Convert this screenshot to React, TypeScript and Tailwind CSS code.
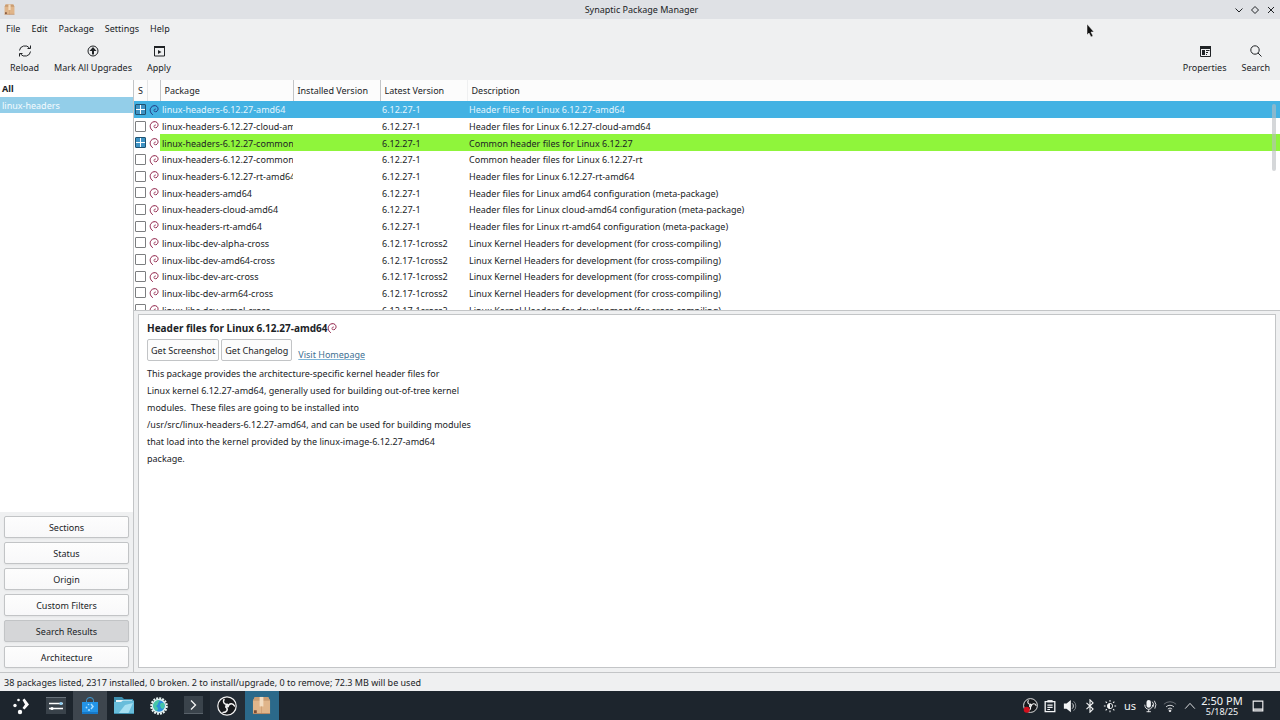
import type { ReactNode } from "react";
import { clsx } from "clsx";

interface Pkg {
  name: string;
  latest: string;
  description: string;
  state?: "selected" | "marked";
}

const CROSS = "Linux Kernel Headers for development (for cross-compiling)";

const packages: Pkg[] = [
  { name: "linux-headers-6.12.27-amd64", latest: "6.12.27-1", description: "Header files for Linux 6.12.27-amd64", state: "selected" },
  { name: "linux-headers-6.12.27-cloud-am", latest: "6.12.27-1", description: "Header files for Linux 6.12.27-cloud-amd64" },
  { name: "linux-headers-6.12.27-common", latest: "6.12.27-1", description: "Common header files for Linux 6.12.27", state: "marked" },
  { name: "linux-headers-6.12.27-common", latest: "6.12.27-1", description: "Common header files for Linux 6.12.27-rt" },
  { name: "linux-headers-6.12.27-rt-amd64", latest: "6.12.27-1", description: "Header files for Linux 6.12.27-rt-amd64" },
  { name: "linux-headers-amd64", latest: "6.12.27-1", description: "Header files for Linux amd64 configuration (meta-package)" },
  { name: "linux-headers-cloud-amd64", latest: "6.12.27-1", description: "Header files for Linux cloud-amd64 configuration (meta-package)" },
  { name: "linux-headers-rt-amd64", latest: "6.12.27-1", description: "Header files for Linux rt-amd64 configuration (meta-package)" },
  { name: "linux-libc-dev-alpha-cross", latest: "6.12.17-1cross2", description: CROSS },
  { name: "linux-libc-dev-amd64-cross", latest: "6.12.17-1cross2", description: CROSS },
  { name: "linux-libc-dev-arc-cross", latest: "6.12.17-1cross2", description: CROSS },
  { name: "linux-libc-dev-arm64-cross", latest: "6.12.17-1cross2", description: CROSS },
  { name: "linux-libc-dev-armel-cross", latest: "6.12.17-1cross2", description: CROSS },
];

const menus = ["File", "Edit", "Package", "Settings", "Help"];
const views = ["Sections", "Status", "Origin", "Custom Filters", "Search Results", "Architecture"];

const details = `This package provides the architecture-specific kernel header files for
Linux kernel 6.12.27-amd64, generally used for building out-of-tree kernel
modules.  These files are going to be installed into
/usr/src/linux-headers-6.12.27-amd64, and can be used for building modules
that load into the kernel provided by the linux-image-6.12.27-amd64
package.`;

function Icon({ children, className = "size-4" }: { children: ReactNode; className?: string }) {
  return (
    <svg className={clsx("shrink-0", className)} viewBox="0 0 16 16" fill="none" stroke="currentColor" aria-hidden="true">
      {children}
    </svg>
  );
}

function DebianSwirl({ blue = false }: { blue?: boolean }) {
  return (
    <svg
      className={clsx("inline-block size-[10px] align-middle", blue ? "text-[#24357f]" : "text-[#8f2148]")}
      viewBox="0 0 20 20"
      fill="none"
      stroke="currentColor"
      strokeLinecap="round"
      aria-hidden="true"
    >
      <path strokeWidth="2" d="M7 19C2 16 1 9 4 5c3-4 9-5 12-2 3 3 3 8-1 10" />
      <path strokeWidth="1.600" d="M15 13c-2 1-5 1-5-2 0-2 1-3 3-3" />
    </svg>
  );
}

function PackageBox({ className }: { className: string }) {
  return (
    <svg className={className} viewBox="0 0 20 20" aria-hidden="true">
      <path fill="#e0b58a" d="M3 1h14l2 4v14H1V5z" />
      <path fill="#c99c72" d="M3 1h14l2 4H1z" />
      <path fill="#f2dcc1" d="M8 1h4v10H8z" />
      <path fill="#d0a276" d="M9.500 11h1v8h-1z" />
      <path fill="#7d4f36" d="M2 15h3v3H2z" />
      <path fill="#b58562" d="M1 18h18v1H1z" />
    </svg>
  );
}

function ObsLogo({ className, recording = false }: { className: string; recording?: boolean }) {
  return (
    <svg className={className} viewBox="0 0 20 20" fill="none" stroke="#f4f4f4" aria-hidden="true">
      <circle cx="10" cy="10" r="9.200" fill="#17191c" strokeWidth="1.200" />
      <g strokeWidth="1.500" strokeLinecap="round">
        <path d="M10.500 8.500C7 8.500 5.500 6 7 3.500" />
        <path d="M11 10.500c1-3.500 5-3.800 6.500-.5" />
        <path d="M9 11c2.500 2.500 1 5.500-3 5.500" />
        <path d="M10.500 8.500a2 2 0 0 1 .5 2M11 10.500a2 2 0 0 1-2 .5M9 11a2 2 0 0 1 1.500-2.500" />
      </g>
      {recording && <circle cx="5" cy="15.500" r="4" fill="#d3101d" stroke="none" />}
    </svg>
  );
}

function ToolButton({ label, children }: { label: string; children: ReactNode }) {
  return (
    <button className="flex flex-col items-center gap-[2px]">
      {children}
      <span>{label}</span>
    </button>
  );
}

function TitleBar() {
  return (
    <header className="grid h-[19px] shrink-0 grid-cols-3 items-center bg-[#dfe1e5] pr-px pl-1">
      <PackageBox className="size-[11px]" />
      <h1 className="text-center">Synaptic Package Manager</h1>
      <div className="flex justify-end">
        <button aria-label="Minimize">
          <Icon><path d="M4.500 6.500 8 10l3.500-3.500" /></Icon>
        </button>
        <button aria-label="Maximize">
          <Icon><path d="m8 4.500 3.500 3.500-3.500 3.500-3.500-3.500z" /></Icon>
        </button>
        <button aria-label="Close">
          <Icon><path d="m5 5 6 6m0-6-6 6" /></Icon>
        </button>
      </div>
    </header>
  );
}

function ToolBar() {
  return (
    <div className="flex h-[42px] shrink-0 items-start justify-between pt-[5px] pr-[10px] pl-[10px]">
      <div className="flex gap-[15px]">
        <ToolButton label="Reload">
          <Icon>
            <path d="M2.500 7.500a5.500 5 0 0 1 10-2.500M13.500 2.500V5.500h-3M13.500 8.500a5.500 5 0 0 1-10 2.500M2.500 13.500V10.500h3" />
          </Icon>
        </ToolButton>
        <ToolButton label="Mark All Upgrades">
          <Icon>
            <circle cx="8" cy="8" r="5" />
            <path strokeWidth="2" d="M8 11.500V7" />
            <path fill="currentColor" stroke="none" d="M8 4 11.500 8h-7z" />
          </Icon>
        </ToolButton>
        <ToolButton label="Apply">
          <Icon>
            <path d="M3.500 3.500h10v9.500h-10z" />
            <path strokeWidth="2" d="M3 4h11" />
            <path fill="currentColor" stroke="none" d="M7 7 10.500 9 7 11z" />
          </Icon>
        </ToolButton>
      </div>
      <div className="flex gap-[15px]">
        <ToolButton label="Properties">
          <Icon>
            <path d="M3.500 3.500h10v10h-10z" />
            <path strokeWidth="3" d="M3 4.500h11" />
            <path fill="currentColor" stroke="none" d="M5 7h3v5H5z" />
            <path d="M9 7.500h3.500M9 9.500h2M9 11.500h1" />
          </Icon>
        </ToolButton>
        <ToolButton label="Search">
          <Icon>
            <circle cx="7" cy="7" r="4.200" />
            <path d="m10 10 3.500 3.500" />
          </Icon>
        </ToolButton>
      </div>
    </div>
  );
}

function Sidebar() {
  return (
    <aside className="flex w-[134px] shrink-0 flex-col border-r border-[#c3c5c7]">
      <ul className="flex-1 bg-white">
        <li className="h-[17px] pl-[2px] leading-[17px] font-bold">All</li>
        <li className="h-4 bg-[#93cee9] pl-[2px] leading-[17px] text-[#f4fbfe]">linux-headers</li>
      </ul>
      <div className="flex flex-col gap-1 p-1">
        {views.map((view) => (
          <button
            key={view}
            className={clsx(
              "h-[22px] rounded-xs border border-[#c2c4c6] shadow-xs",
              view === "Search Results" ? "bg-[#d5d6d8]" : "bg-linear-to-b from-[#fdfdfd] to-[#f8f8f9]"
            )}
          >
            {view}
          </button>
        ))}
      </div>
    </aside>
  );
}

function PackageRow({ pkg }: { pkg: Pkg }) {
  const selected = pkg.state === "selected";
  const fill = pkg.state === "marked" ? "bg-[#8ff53b]" : "";

  return (
    <tr className={selected ? "bg-[#43b2e3] text-[#e3f5fd]" : ""}>
      <td className="p-0">
        <div className="relative ml-px size-[11px]">
          <input
            type="checkbox"
            aria-label={`Mark ${pkg.name}`}
            defaultChecked={!!pkg.state}
            className="block size-[11px] appearance-none rounded-[1px] border border-[#7c7e80] bg-white checked:border-[#1f5270] checked:bg-[#3f93c4]"
          />
          {pkg.state && (
            <svg className="pointer-events-none absolute inset-0" viewBox="0 0 11 11" stroke="#fff" aria-hidden="true">
              <path d="M5.500 1v9M1 5.500h9" />
            </svg>
          )}
        </div>
      </td>
      <td className="p-0 pl-[2px] leading-none">
        <DebianSwirl blue={selected} />
      </td>
      <td className={clsx("p-0 pt-px pl-[2px]", fill)}>
        <div className="overflow-hidden">{pkg.name}</div>
      </td>
      <td className={clsx("p-0", fill)}></td>
      <td className={clsx("p-0 pt-px pl-[2px]", fill)}>{pkg.latest}</td>
      <td className={clsx("p-0 pt-px pl-[2px]", fill)}>{pkg.description}</td>
    </tr>
  );
}

function PackageList() {
  return (
    <div className="relative h-[231px] shrink-0 overflow-hidden border-b border-[#c3c5c7] bg-white">
      {/* row heights share out what the header leaves */}
      <table className="h-[238px] w-full table-fixed border-collapse whitespace-nowrap">
        <colgroup>
          <col className="w-[13px]" />
          <col className="w-[13px]" />
          <col className="w-[133px]" />
          <col className="w-[87px]" />
          <col className="w-[87px]" />
          <col />
        </colgroup>
        <thead>
          <tr className="h-[21px] bg-[#fcfcfc] text-left">
            <th className="border-r border-[#e4e5e6] p-0 pl-1 font-normal">S</th>
            <th className="border-r border-[#c3c5c7] p-0"></th>
            <th className="border-r border-[#c3c5c7] p-0 pl-1 font-normal">Package</th>
            <th className="border-r border-[#c3c5c7] p-0 pl-1 font-normal">Installed Version</th>
            <th className="border-r border-[#eff0f1] p-0 pl-1 font-normal">Latest Version</th>
            <th className="p-0 pl-1 font-normal">Description</th>
          </tr>
        </thead>
        <tbody>
          {packages.map((pkg, i) => (
            <PackageRow key={i} pkg={pkg} />
          ))}
        </tbody>
      </table>
      <div className="absolute top-6 right-1 h-[67px] w-1 rounded-full bg-[#b9bdc0]/60" />
    </div>
  );
}

function DetailsPane() {
  return (
    <section className="mx-1 mt-[3px] mb-1 flex-1 border border-[#c3c5c7] bg-white px-2 pt-[6px]">
      <h2 className="flex items-center text-[10px] leading-[14px] font-bold">
        Header files for Linux 6.12.27-amd64
        <DebianSwirl />
      </h2>
      <div className="mt-1 flex items-end gap-[2px]">
        <button className="h-[22px] rounded-xs border border-[#c2c4c6] bg-[#fcfcfc] px-[3px]">Get Screenshot</button>
        <button className="h-[22px] rounded-xs border border-[#c2c4c6] bg-[#fcfcfc] px-[3px]">Get Changelog</button>
        <a href="#homepage" className="ml-1 text-[#3f7193] underline decoration-[#7fb6d8]">
          Visit Homepage
        </a>
      </div>
      <p className="mt-1 leading-[17px] whitespace-pre-wrap">{details}</p>
    </section>
  );
}

function Task({ label, className, children }: { label: string; className?: string; children: ReactNode }) {
  return (
    <button aria-label={label} className={clsx("flex items-center justify-center", className)}>
      {children}
    </button>
  );
}

function TaskBar() {
  return (
    <footer className="flex h-[29px] shrink-0 justify-between bg-[#1d252d] pr-2 pl-1 text-[#f3f4f5]">
      <div className="grid w-[275px] grid-cols-8">
        <Task label="Application Launcher">
          <svg className="size-[18px]" viewBox="0 0 18 18" fill="#fcfcfc" aria-hidden="true">
            <circle cx="6.500" cy="3" r="1.300" />
            <circle cx="3" cy="8.500" r="1.700" />
            <circle cx="8" cy="15" r="2.200" />
            <path d="m10.500 3 2-1.500 4.500 6-4.500 5-2-1.500L13 7.500z" />
          </svg>
        </Task>
        <Task label="System Settings">
          <svg className="size-5" viewBox="0 0 20 20" aria-hidden="true">
            <path fill="#39424a" d="M0 1h20v17H0z" />
            <path fill="#68717a" d="M0 1h20v1H0z" />
            <path stroke="#fff" strokeWidth="1.300" d="M3 7.500h14M3 12.500h14" />
            <circle cx="15" cy="7.500" r="1.600" fill="#8fd0f5" />
            <circle cx="6" cy="12.500" r="1.600" fill="#fff" />
          </svg>
        </Task>
        <Task label="Discover" className="bg-[#3e464e]">
          <svg className="size-[18px]" viewBox="0 0 18 18" fill="none" aria-hidden="true">
            <path stroke="#3f9cda" d="M5.500 6V3.500a3.500 3 0 0 1 7 0V6" />
            <path fill="#2494e6" d="M1 5h16v12H1z" />
            <path fill="#1678c8" d="M1 15h16v2H1z" />
            <g fill="#a9ddff">
              <circle cx="7.500" cy="7.500" r=".8" />
              <circle cx="5.500" cy="10.500" r=".9" />
              <circle cx="8" cy="13" r="1.100" />
              <path d="m9.500 7.500 1-1 2.500 3-2.500 3-1-1 1.500-2z" />
            </g>
          </svg>
        </Task>
        <Task label="Files">
          <svg className="size-5" viewBox="0 0 20 20" aria-hidden="true">
            <path fill="#3e8fae" d="M0 1h8l2 2h9v5H0z" />
            <path fill="#e9f4f8" d="M2 4h16v4H2z" />
            <path fill="#68bddb" d="M0 6h7l2-1.500h11V18H0z" />
            <path fill="#a6e0f2" d="m11 9 8-2-5 11H4z" />
            <path fill="#3e8fae" d="M0 17h20v1H0z" />
          </svg>
        </Task>
        <Task label="Web Browser">
          <svg className="size-[18px]" viewBox="0 0 18 18" aria-hidden="true">
            <circle cx="9" cy="9" r="7.800" fill="none" stroke="#e9f4f2" strokeWidth="2" strokeDasharray="2 1.060" />
            <circle cx="9" cy="9" r="7.200" fill="#e3f2f1" />
            <circle cx="9" cy="9" r="5.800" fill="#2b8fdc" />
            <path fill="#46c6a7" d="M4 6c1-2 3-3 5-3 1 1 0 2-1 3 0 2-1 2-2 3l2 2c0 2-1 3-2 3-2-2-4-5-2-8M11 6l3 0c1 2 1 4-1 6l-2-1-1-3z" />
          </svg>
        </Task>
        <Task label="Terminal">
          <svg className="size-[19px]" viewBox="0 0 19 19" fill="none" aria-hidden="true">
            <path fill="#3a434b" d="M0 0h19v18H0z" />
            <path fill="#59626a" d="M0 17h19v1H0z" />
            <path stroke="#f5f5f5" strokeWidth="1.300" d="m7 4.500 4.500 4.500L7 13.500" />
          </svg>
        </Task>
        <Task label="OBS Studio" className="bg-[#242d36]">
          <ObsLogo className="size-5" />
        </Task>
        <Task label="Synaptic" className="bg-[#2b698a]">
          <PackageBox className="size-[19px]" />
        </Task>
      </div>

      {/* System tray */}
      <div className="flex items-center">
        <div className="grid grid-cols-9 items-center justify-items-center">
          <span className="flex w-5 justify-center"><ObsLogo className="size-[15px]" recording /></span>
          <Icon className="size-[14px]">
            <path strokeWidth="1.500" d="M2.500 3h11v11.500h-11z" />
            <path strokeWidth="2.500" d="M5 2.500h6" />
            <path strokeWidth="1.300" d="M5 7h6M5 9.500h6M5 12h3" />
          </Icon>
          <Icon className="size-[14px]">
            <path fill="currentColor" stroke="none" d="M1 5h3l5-4v14l-5-4H1z" />
            <path d="M10.500 5a4 4 0 0 1 0 6" />
            <path opacity=".5" d="M12 2.500a7 7 0 0 1 0 11" />
          </Icon>
          <Icon className="size-[14px]">
            <path strokeWidth="1.300" d="m4 4.500 7.500 7L8 15V1l3.500 3.500-7.500 7" />
          </Icon>
          <Icon className="size-[14px]">
            <circle cx="8" cy="8" r="3" />
            <path fill="currentColor" stroke="none" d="M8 5a3 3 0 0 0 0 6z" />
            <path strokeWidth="1.200" d="M8 1v2M8 13v2M1 8h2M13 8h2M3 3l1.500 1.500M11.500 11.500 13 13M13 3l-1.500 1.500M4.500 11.500 3 13" />
          </Icon>
          <span className="text-[11px] leading-4">us</span>
          <Icon className="size-[14px]">
            <rect x="4" y="1" width="5" height="9" rx="2.500" fill="currentColor" stroke="none" />
            <path d="M2 6.500c0 7 9 7 9 0M6.500 12v3M4 14.500h5M10.500 3a5 5 0 0 1 1 6M13 2a8 8 0 0 1 .5 9" />
          </Icon>
          <Icon className="size-[14px]">
            <path opacity=".4" d="M1 6a10 10 0 0 1 14 0" />
            <path d="M3.500 9a6.500 6.500 0 0 1 9 0M5.500 11.500a3.500 3.500 0 0 1 5 0" />
            <circle cx="8" cy="13.500" r="1" fill="currentColor" />
          </Icon>
          <Icon className="size-[14px]">
            <path d="m2.500 11 5.500-6 5.500 6" />
          </Icon>
        </div>
        <div className="w-11 text-center">
          <div className="text-[11px] leading-[12px]">2:50 PM</div>
          <div className="text-[9px] leading-[9px]">5/18/25</div>
        </div>
        <button aria-label="Show desktop" className="flex w-7 justify-center">
          <Icon className="size-[14px]">
            <path strokeWidth="1.300" d="M2.500 2.500h11v11h-11zM2.500 11.500h11" />
          </Icon>
        </button>
      </div>
    </footer>
  );
}

export default function App() {
  return (
    <div className="relative flex h-screen flex-col overflow-hidden bg-[#eff0f1] font-['Noto_Sans',sans-serif] text-[9px] leading-[13px] text-[#202326]">
      <TitleBar />
      <nav className="flex h-[19px] shrink-0 items-center gap-[11px] px-[6px]">
        {menus.map((menu) => (
          <button key={menu}>{menu}</button>
        ))}
      </nav>
      <ToolBar />
      <main className="flex min-h-0 flex-1">
        <Sidebar />
        <div className="flex min-w-0 flex-1 flex-col">
          <PackageList />
          <DetailsPane />
        </div>
      </main>
      <div className="h-[19px] shrink-0 border-t border-[#c3c5c7] pl-1 leading-[19px]">
        38 packages listed, 2317 installed, 0 broken. 2 to install/upgrade, 0 to remove; 72.3 MB will be used
      </div>
      <TaskBar />

      {/* Mouse pointer */}
      <svg className="absolute top-6 right-[185px] h-[13px] w-[9px]" viewBox="0 0 9 13" aria-hidden="true">
        <path fill="#111" stroke="#fff" strokeWidth=".5" d="M1 0v11l2-2 2 4 2-1-2-4h3z" />
      </svg>
    </div>
  );
}
